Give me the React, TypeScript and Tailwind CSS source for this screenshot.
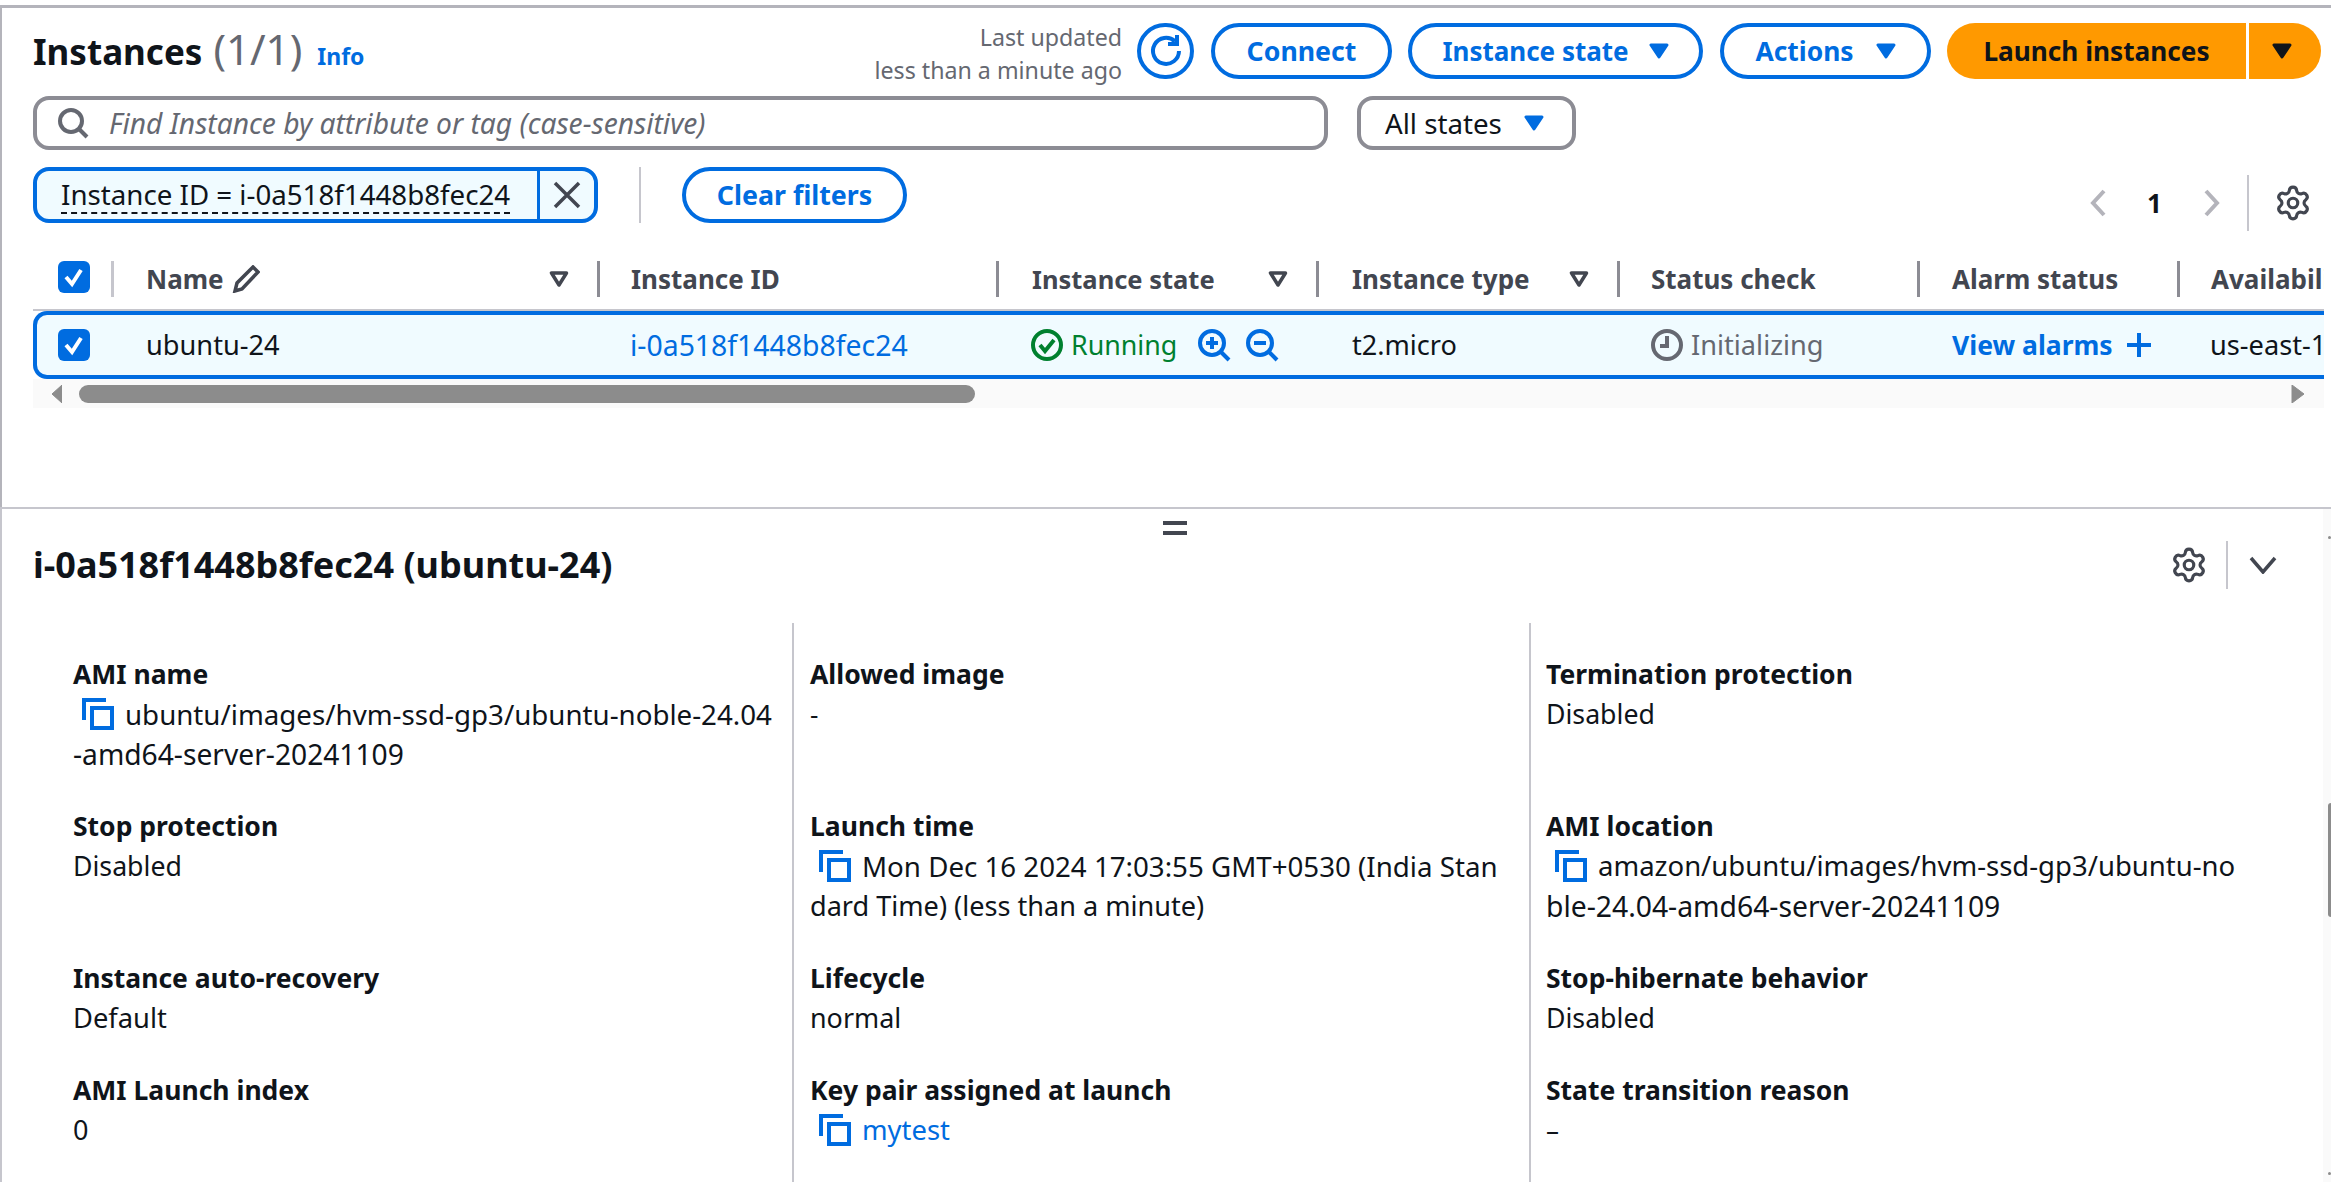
import React from "react";
import { Settings } from "lucide-react";

const Caret = ({ color = "#006ce0" }: { color?: string }) => (
  <svg width="20" height="16" viewBox="0 0 20 16" className="shrink-0">
    <path d="M2 2h16l-8 12z" fill={color} stroke={color} strokeWidth="3" strokeLinejoin="round" />
  </svg>
);

const FilterCaret = () => (
  <svg width="20" height="16" viewBox="0 0 20 16" className="shrink-0">
    <path d="M2.5 2h15L10 14z" fill="none" stroke="#424650" strokeWidth="3.5" strokeLinejoin="round" />
  </svg>
);

const Copy = () => (
  <svg width="32" height="32" viewBox="0 0 32 32" className="shrink-0" fill="none" stroke="#006ce0" strokeWidth="4">
    <rect x="10" y="10" width="20" height="20" />
    <path d="M2 22V2h22" />
  </svg>
);

const Check = () => (
  <span className="flex h-[32px] w-[32px] shrink-0 items-center justify-center rounded-[6px] bg-[#006ce0]">
    <svg width="22" height="22" viewBox="0 0 22 22" fill="none" stroke="#fff" strokeWidth="4">
      <path d="M3 11l6 7 9-14" />
    </svg>
  </span>
);

const Magnifier = ({ plus }: { plus?: boolean }) => (
  <svg width="34" height="34" viewBox="0 0 34 34" fill="none" stroke="#006ce0" strokeWidth="4" className="shrink-0">
    <circle cx="15" cy="15" r="12" />
    <path d="M24 24l8 8" />
    <path d="M9 15h12" />
    {plus && <path d="M15 9v12" />}
  </svg>
);

function Head({ children, className }: { children: React.ReactNode; className: string }) {
  return (
    <div className={`flex h-[36px] items-center overflow-hidden whitespace-nowrap border-l-[3px] pr-[28px] font-bold text-[#424650] ${className}`}>
      {children}
    </div>
  );
}

function Item({ label, children }: { label: string; children: React.ReactNode }) {
  return (
    <div className="pb-[32px]">
      <div className="text-[26.5px] font-bold text-[#0f141a]">{label}</div>
      <div className="text-[#0f141a]">{children}</div>
    </div>
  );
}

function CopyLine({ children, className }: { children: React.ReactNode; className: string }) {
  return (
    <div className="flex h-[40px] items-center gap-[11px] whitespace-nowrap pl-[9px]">
      <Copy />
      <span className={className}>{children}</span>
    </div>
  );
}

export default function App() {
  return (
    <div className="h-[1183px] w-full overflow-hidden bg-white pt-[5px] text-[26px] leading-[40px] text-[#0f141a] [font-family:'Noto_Sans',sans-serif]">
      <div className="h-[502px] overflow-hidden border-l-2 border-t-[3px] border-[#b4b4bb] pl-[31px] pt-[15px]">
        <div className="flex h-[56px] items-center pr-[10px]">
          <div className="flex items-baseline pt-[2px]">
            <span className="text-[35px] font-bold">Instances</span>
            <span className="ml-[11px] text-[42px] text-[#656871]">(1/1)</span>
            <span className="ml-[15px] text-[23px] font-bold text-[#006ce0]">Info</span>
          </div>
          <div className="ml-auto flex items-center">
            <div className="pt-[6px] text-right text-[23.2px] leading-[33px] text-[#656871]">
              <div>Last updated</div>
              <div>less than a minute ago</div>
            </div>
            <button className="ml-[15px] flex h-[56px] w-[57px] items-center justify-center rounded-full border-4 border-[#006ce0]">
              <svg width="36" height="36" viewBox="0 0 36 36" fill="none" stroke="#006ce0" strokeWidth="4">
                <path d="M31 18a13 13 0 1 1-4-9.5" />
                <path d="M29 2v9h-9" />
              </svg>
            </button>
            <button className="ml-[17px] flex h-[56px] w-[181px] items-center justify-center rounded-full border-4 border-[#006ce0] text-[26.7px] font-bold text-[#006ce0]">Connect</button>
            <button className="ml-[16px] flex h-[56px] w-[295px] items-center justify-center gap-[20px] rounded-full border-4 border-[#006ce0] font-bold text-[#006ce0]">Instance state<Caret /></button>
            <button className="ml-[17px] flex h-[56px] w-[211px] items-center justify-center gap-[22px] rounded-full border-4 border-[#006ce0] text-[26.4px] font-bold text-[#006ce0]">Actions<Caret /></button>
            <button className="ml-[16px] flex h-[56px] w-[299px] items-center justify-center rounded-l-full bg-[#ff9900] text-[26.2px] font-bold">Launch instances</button>
            <button className="ml-[3px] flex h-[56px] w-[72px] items-center justify-center rounded-r-full bg-[#ff9900] pr-[6px]"><Caret color="#0f141a" /></button>
          </div>
        </div>

        <div className="mt-[17px] flex items-center gap-[29px]">
          <div className="flex h-[54px] w-[1295px] items-center gap-[20px] rounded-[16px] border-4 border-[#8c8c94] pl-[20px]">
            <svg width="32" height="32" viewBox="0 0 32 32" fill="none" stroke="#656871" strokeWidth="4">
              <circle cx="14" cy="14" r="11" />
              <path d="M22 22l8 8" />
            </svg>
            <span className="text-[28.2px] italic text-[#656871]">Find Instance by attribute or tag (case-sensitive)</span>
          </div>
          <div className="flex h-[54px] w-[219px] items-center gap-[22px] rounded-[16px] border-4 border-[#8c8c94] pl-[24px] text-[27.7px]">
            All states<Caret />
          </div>
        </div>

        <div className="mt-[17px] flex h-[56px] items-start pr-[19px]">
          <div className="flex h-[56px] w-[565px] overflow-hidden rounded-[16px] border-4 border-[#006ce0] bg-[#f0fbff]">
            <div className="flex w-[500px] items-center pl-[24px]">
              <span className="whitespace-nowrap border-b-2 border-dashed border-[#0f141a] text-[27.7px] leading-[36px]">Instance ID = i-0a518f1448b8fec24</span>
            </div>
            <div className="flex flex-1 items-center justify-center border-l-[3px] border-[#006ce0]">
              <svg width="28" height="28" viewBox="0 0 28 28" fill="none" stroke="#424650" strokeWidth="3.5">
                <path d="M2 2l24 24M26 2L2 26" />
              </svg>
            </div>
          </div>
          <div className="ml-[41px] h-[56px] w-[2px] bg-[#c6c6cd]" />
          <button className="ml-[41px] flex h-[56px] w-[225px] items-center justify-center rounded-full border-4 border-[#006ce0] text-[26.8px] font-bold text-[#006ce0]">Clear filters</button>
          <div className="ml-auto mt-[8px] flex h-[56px] items-center">
            <svg width="20" height="28" viewBox="0 0 20 28" fill="none" stroke="#b4b4bb" strokeWidth="4"><path d="M16 2L5 14l11 12" /></svg>
            <span className="ml-[39px] w-[20px] font-bold">1</span>
            <svg className="ml-[35px]" width="20" height="28" viewBox="0 0 20 28" fill="none" stroke="#b4b4bb" strokeWidth="4"><path d="M4 2l11 12L4 26" /></svg>
            <div className="ml-[25px] h-[56px] w-[2px] bg-[#c6c6cd]" />
            <Settings className="ml-[25px]" size={38} color="#424650" strokeWidth={2} />
          </div>
        </div>

        <div className="pr-[7px]">
          <div className="mt-[38px] grid h-[50px] grid-cols-[78px_486px_399px_320px_301px_300px_260px_1fr] items-start border-b-2 border-[#c6c6cd]">
            <div className="pl-[25px]"><Check /></div>
            <Head className="border-[#c6c6cd] pl-[32px]">Name
              <svg className="ml-[8px]" width="28" height="28" viewBox="0 0 28 28" fill="none" stroke="#424650" strokeWidth="3.5">
                <path d="M21 2l5 5L10 24l-7 2 2-8z" />
              </svg>
              <span className="ml-auto"><FilterCaret /></span>
            </Head>
            <Head className="border-[#8c8c94] pl-[31px]">Instance ID</Head>
            <Head className="border-[#8c8c94] pl-[33px] text-[25.5px]">Instance state<span className="ml-auto"><FilterCaret /></span></Head>
            <Head className="border-[#8c8c94] pl-[33px]">Instance type<span className="ml-auto"><FilterCaret /></span></Head>
            <Head className="border-[#8c8c94] pl-[31px]">Status check</Head>
            <Head className="border-[#8c8c94] pl-[32px]">Alarm status</Head>
            <Head className="border-[#8c8c94] pl-[31px] pr-0">Availability Zone</Head>
          </div>

          <div className="grid h-[68px] grid-cols-[74px_486px_399px_320px_301px_300px_260px_1fr] rounded-l-[14px] border-y-4 border-l-4 border-[#006ce0] bg-[#f0fbff]">
            <div className="flex items-center pl-[21px]"><Check /></div>
            <div className="flex items-center whitespace-nowrap pl-[35px] text-[27.2px]">ubuntu-24</div>
            <div className="flex items-center whitespace-nowrap pl-[33px] text-[28.4px] text-[#006ce0]">i-0a518f1448b8fec24</div>
            <div className="flex items-center pl-[35px]">
              <svg width="32" height="32" viewBox="0 0 32 32" fill="none" stroke="#00802f" strokeWidth="4" className="shrink-0">
                <circle cx="16" cy="16" r="14" />
                <path d="M9 16l5 6 9-11" />
              </svg>
              <span className="ml-[8px] text-[26.8px] text-[#00802f]">Running</span>
              <span className="ml-[20px]"><Magnifier plus /></span>
              <span className="ml-[14px]"><Magnifier /></span>
            </div>
            <div className="flex items-center whitespace-nowrap pl-[36px] text-[27.1px]">t2.micro</div>
            <div className="flex items-center pl-[34px]">
              <svg width="32" height="32" viewBox="0 0 32 32" fill="none" stroke="#656871" strokeWidth="4" className="shrink-0">
                <circle cx="16" cy="16" r="14" />
                <path d="M16 7v10H9" />
              </svg>
              <span className="ml-[8px] text-[27.2px] text-[#656871]">Initializing</span>
            </div>
            <div className="flex items-center whitespace-nowrap pl-[35px] text-[26.5px] font-bold text-[#006ce0]">
              View alarms
              <svg className="ml-[13px] shrink-0" width="26" height="26" viewBox="0 0 26 26" fill="none" stroke="#006ce0" strokeWidth="4"><path d="M13 1v24M1 13h24" /></svg>
            </div>
            <div className="flex items-center overflow-hidden whitespace-nowrap pl-[33px] text-[27.2px]">us-east-1a</div>
          </div>

          <div className="flex h-[29px] items-center bg-[#fafafa] pl-[17px] pr-[19px]">
            <svg width="12" height="18" viewBox="0 0 12 18"><path d="M12 0v18L2 9z" fill="#8c8c8c" stroke="#8c8c8c" strokeLinejoin="round" /></svg>
            <div className="ml-[17px] h-[18px] w-[896px] rounded-full bg-[#8c8c8c]" />
            <svg className="ml-auto" width="14" height="18" viewBox="0 0 14 18"><path d="M1 0v18l12-9z" fill="#8c8c8c" stroke="#8c8c8c" strokeLinejoin="round" /></svg>
          </div>
        </div>
      </div>

      <div className="flex border-l-2 border-t-2 border-[#c6c6cd]">
        <div className="min-w-0 flex-1 pl-[31px]">
          <div className="flex justify-center pr-[6px] pt-[12px]">
            <div className="h-[14px] w-[24px] border-y-4 border-[#424650]" />
          </div>
          <div className="mt-[6px] flex h-[48px] items-center pr-[46px]">
            <div className="text-[36px] font-bold">i-0a518f1448b8fec24 (ubuntu-24)</div>
            <Settings className="ml-auto" size={38} color="#424650" strokeWidth={2} />
            <div className="ml-[18px] h-[48px] w-[2px] bg-[#c6c6cd]" />
            <svg className="ml-[21px]" width="28" height="18" viewBox="0 0 28 18" fill="none" stroke="#424650" strokeWidth="3.5"><path d="M2 2l12 14L26 2" /></svg>
          </div>
          <div className="mt-[34px] grid grid-cols-[759px_737px_1fr]">
            <div className="pl-[40px] pt-[31px]">
              <Item label="AMI name">
                <CopyLine className="text-[27.7px]">ubuntu/images/hvm-ssd-gp3/ubuntu-noble-24.04</CopyLine>
                <div className="text-[28.2px]">-amd64-server-20241109</div>
              </Item>
              <Item label="Stop protection"><div className="h-[80px] text-[26.7px]">Disabled</div></Item>
              <Item label="Instance auto-recovery"><span className="text-[27.3px]">Default</span></Item>
              <Item label="AMI Launch index"><span className="text-[27px]">0</span></Item>
            </div>
            <div className="border-l-2 border-[#c6c6cd] pl-[16px] pt-[31px]">
              <Item label="Allowed image"><div className="h-[80px]">-</div></Item>
              <Item label="Launch time">
                <CopyLine className="text-[27.7px]">Mon Dec 16 2024 17:03:55 GMT+0530 (India Stan</CopyLine>
                <div className="text-[27.1px]">dard Time) (less than a minute)</div>
              </Item>
              <Item label="Lifecycle"><span className="text-[26.9px]">normal</span></Item>
              <Item label="Key pair assigned at launch">
                <CopyLine className="text-[27.4px] text-[#006ce0]">mytest</CopyLine>
              </Item>
            </div>
            <div className="border-l-2 border-[#c6c6cd] pl-[15px] pt-[31px]">
              <Item label="Termination protection"><div className="h-[80px] text-[26.7px]">Disabled</div></Item>
              <Item label="AMI location">
                <CopyLine className="text-[27.5px]">amazon/ubuntu/images/hvm-ssd-gp3/ubuntu-no</CopyLine>
                <div className="text-[28.3px]">ble-24.04-amd64-server-20241109</div>
              </Item>
              <Item label="Stop-hibernate behavior"><span className="text-[26.7px]">Disabled</span></Item>
              <Item label="State transition reason">–</Item>
            </div>
          </div>
        </div>
        <div className="flex w-[8px] shrink-0 flex-col items-end bg-[#fafafa]">
          <div className="mt-[27px] h-[3px] w-[3px] rounded-full bg-[#8c8c8c]" />
          <div className="mt-[264px] h-[114px] w-[3px] rounded-l-[3px] bg-[#8c8c8c]" />
          <div className="mt-[255px] h-[3px] w-[3px] rounded-full bg-[#8c8c8c]" />
        </div>
      </div>
    </div>
  );
}
